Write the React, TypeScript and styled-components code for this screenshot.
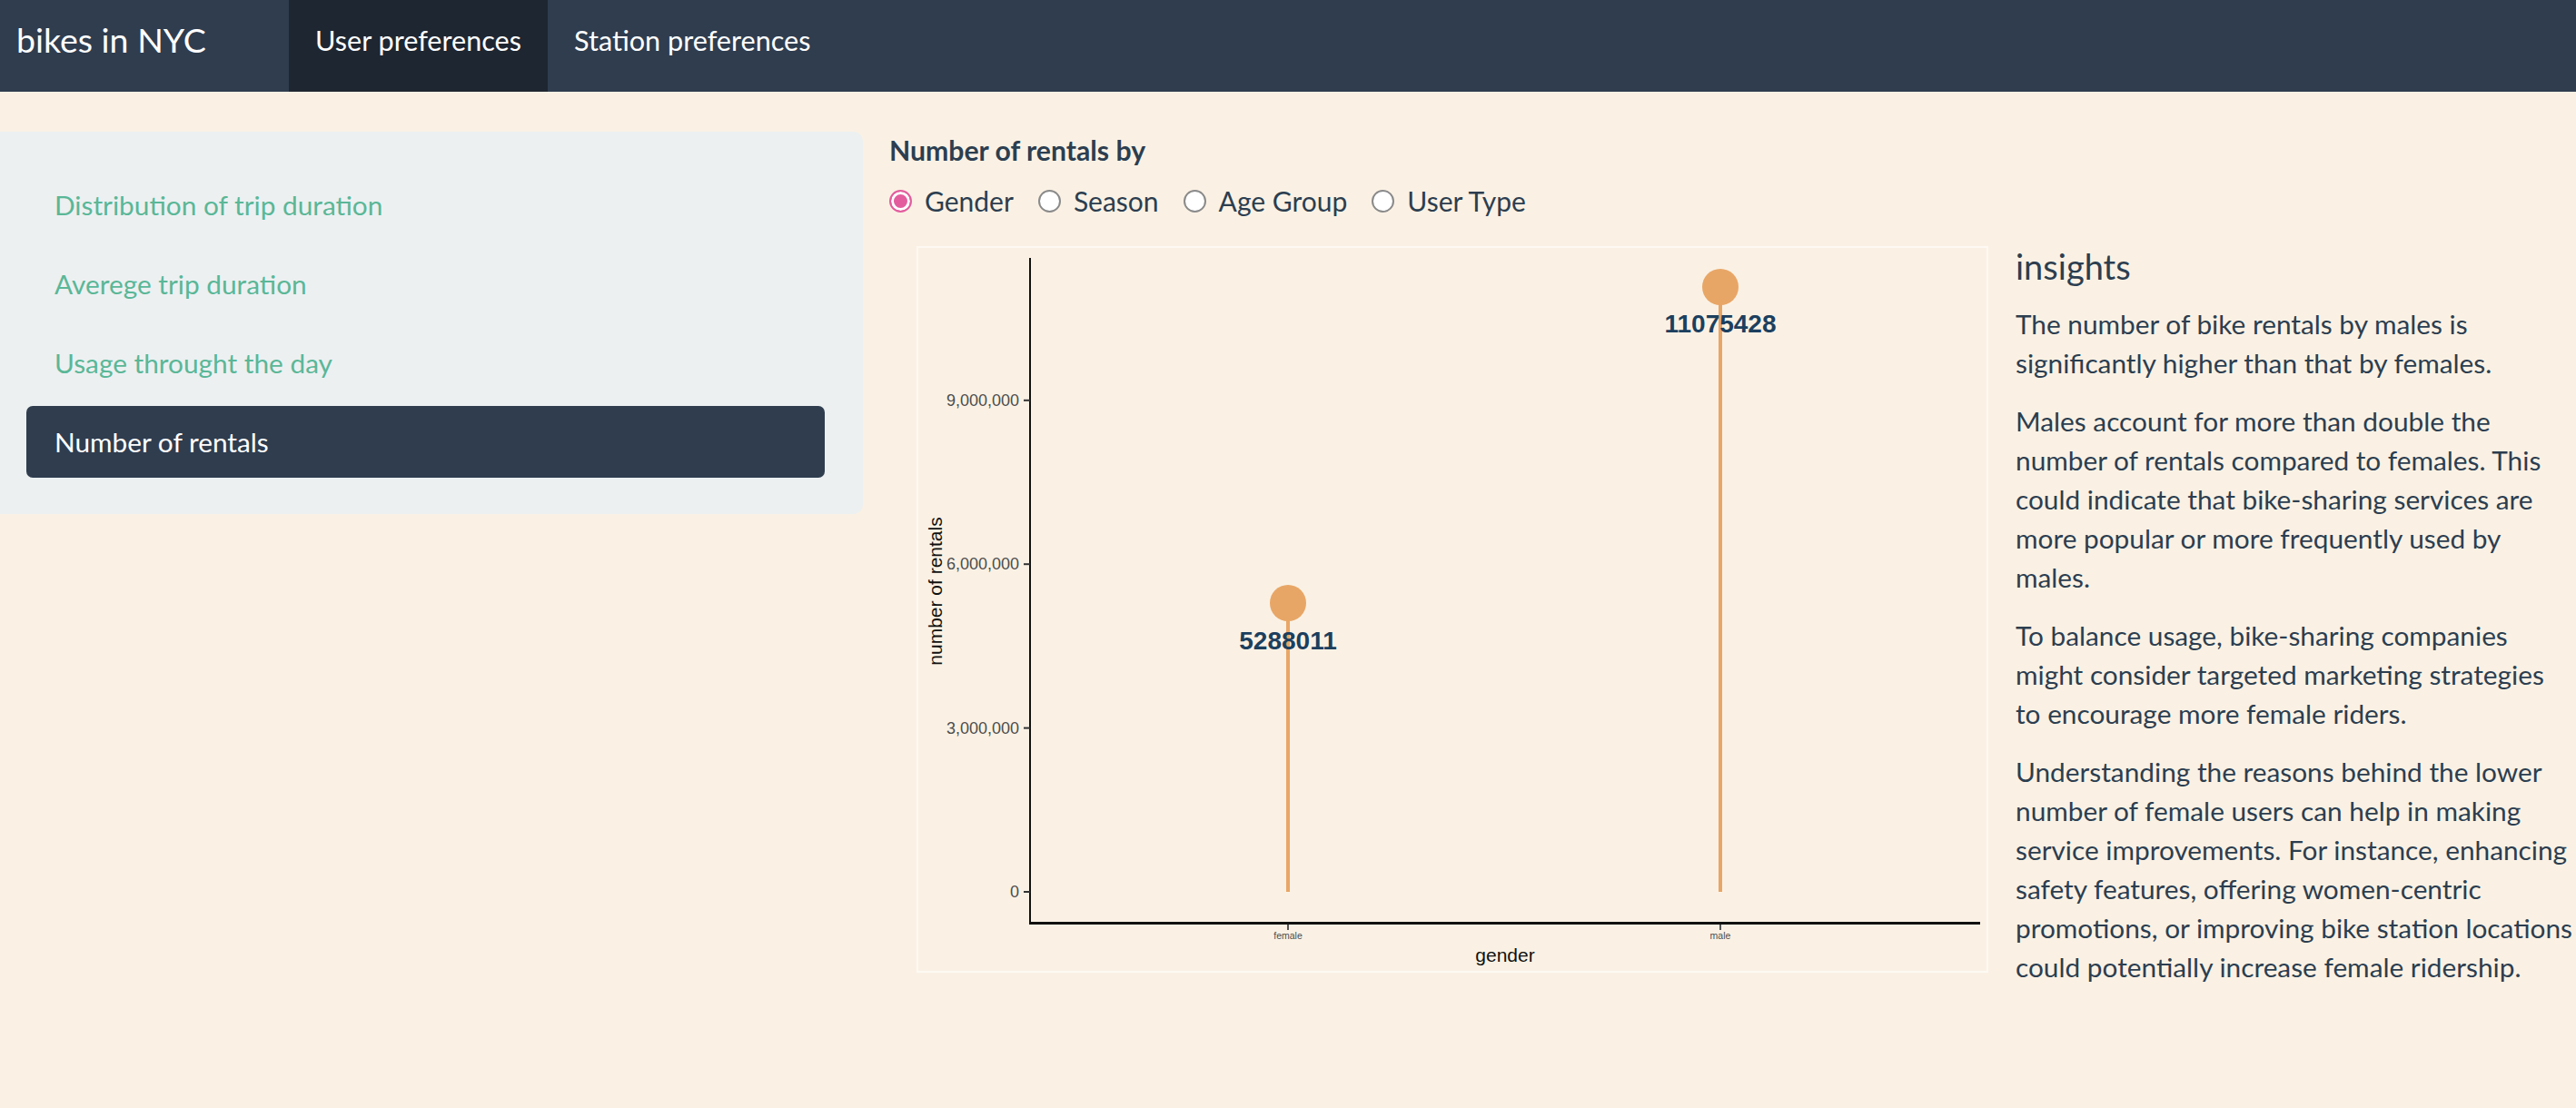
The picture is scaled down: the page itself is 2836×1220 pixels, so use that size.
import React from 'react'
import styled, {createGlobalStyle} from 'styled-components'

const GlobalStyle = createGlobalStyle`
  html, body {
    margin: 0;
    padding: 0;
    background: #faf1e4;
  }
`

const Page = styled.div`
  width: 2836px;
  min-height: 1220px;
  background: #faf1e4;
  color: #2c3e50;
  font-family: Lato, "Noto Sans", sans-serif;
`

const Navbar = styled.nav`
  height: 101px;
  background: #2f3d4f;
  display: flex;
  align-items: stretch;
`
const Brand = styled.div`
  width: 318px;
  box-sizing: border-box;
  padding: 0 0 14px 18px;
  display: flex;
  align-items: center;
  font-size: 37.5px;
  color: #ffffff;
`
const Tab = styled.div<{$active?: boolean}>`
  display: flex;
  align-items: center;
  padding: 0 29px 12px 29px;
  font-size: 30.6px;
  color: #ffffff;
  background: ${p => p.$active ? '#1e2631' : 'transparent'};
`

const Body = styled.div`
  display: grid;
  grid-template-columns: 950px 1fr;
  column-gap: 29px;
  padding-top: 44px;
  align-items: start;
`

const Well = styled.div`
  background: #ecf0f1;
  border-radius: 0 10px 10px 0;
  padding: 41px 42px 40px 29px;
  display: flex;
  flex-direction: column;
  gap: 8px;
`
const Pill = styled.div<{$active?: boolean}>`
  height: 79px;
  display: flex;
  align-items: center;
  padding-left: 31px;
  border-radius: 7px;
  font-size: 29.8px;
  color: ${p => p.$active ? '#ffffff' : '#5ab797'};
  background: ${p => p.$active ? '#2f3d4f' : 'transparent'};
`

const Main = styled.div`
  display: flex;
  flex-direction: column;
`
const Title = styled.div`
  font-weight: 700;
  font-size: 30.2px;
  line-height: 40px;
`
const RadioRow = styled.div`
  display: flex;
  align-items: center;
  height: 40px;
  margin-top: 16px;
`
const RadioItem = styled.label`
  display: flex;
  align-items: center;
  gap: 14px;
  margin-right: 27px;
  font-size: 30px;
`
const RadioDot = styled.span<{$checked?: boolean}>`
  width: 25px;
  height: 25px;
  box-sizing: border-box;
  border-radius: 50%;
  border: 2px solid ${p => p.$checked ? '#e35d9e' : '#8a8a8a'};
  background: ${p => p.$checked ? '#e35d9e' : '#ffffff'};
  box-shadow: ${p => p.$checked ? 'inset 0 0 0 3px #ffffff' : 'none'};
`

const ContentRow = styled.div`
  display: flex;
  align-items: flex-start;
  gap: 30px;
  margin-top: 30px;
  padding-left: 30px;
`
const ChartBox = styled.div`
  width: 1180px;
  height: 800px;
  flex: none;
`
const Insights = styled.div`
  width: 614px;
  flex: none;
`
const InsightsTitle = styled.h4`
  margin: 0 0 18px;
  font-size: 38px;
  font-weight: 400;
  line-height: 1.2;
`
const Para = styled.p`
  margin: 0 0 21px;
  font-size: 29.8px;
  line-height: 43px;
`

const yScale = (v: number) => 711 - (v / 3e6) * 180.4
const ticks = [0, 3e6, 6e6, 9e6]
const data = [
  {label: 'female', x: 409, value: 5288011},
  {label: 'male', x: 885, value: 11075428},
]

const Lollipop = () => (
  <svg width={1180} height={800} fontFamily='"Liberation Sans", Arial, sans-serif'>
    <rect x={1} y={1} width={1178} height={798} fill="none" stroke="#fdf9f3" strokeWidth={2}/>
    <line x1={125} y1={13} x2={125} y2={746} stroke="#111" strokeWidth={2}/>
    <line x1={124} y1={745.5} x2={1171} y2={745.5} stroke="#111" strokeWidth={3}/>
    {ticks.map(t => (
      <g key={t}>
        <line x1={118} x2={125} y1={yScale(t)} y2={yScale(t)} stroke="#333" strokeWidth={2}/>
        <text x={113} y={yScale(t)} textAnchor="end" dominantBaseline="central" fontSize={18} fill="#4d4d4d">
          {t.toLocaleString('en-US')}
        </text>
      </g>
    ))}
    {data.map(d => (
      <g key={d.label}>
        <line x1={d.x} x2={d.x} y1={747} y2={753} stroke="#555" strokeWidth={2}/>
        <text x={d.x} y={759} textAnchor="middle" dominantBaseline="central" fontSize={10.5} fill="#4d4d4d">{d.label}</text>
        <line x1={d.x} x2={d.x} y1={yScale(d.value)} y2={711} stroke="#e8a666" strokeWidth={4}/>
        <circle cx={d.x} cy={yScale(d.value)} r={20} fill="#e8a666"/>
        <text x={d.x} y={yScale(d.value) + 41} textAnchor="middle" dominantBaseline="central" fontSize={28} fontWeight={700} fill="#1c3f5e">
          {d.value}
        </text>
      </g>
    ))}
    <text x={648} y={780} textAnchor="middle" dominantBaseline="central" fontSize={21} fill="#111">gender</text>
    <text transform="translate(20 380) rotate(-90)" textAnchor="middle" dominantBaseline="central" fontSize={21} fill="#111">
      number of rentals
    </text>
  </svg>
)

const options = ['Gender', 'Season', 'Age Group', 'User Type']
const pills = ['Distribution of trip duration', 'Averege trip duration', 'Usage throught the day', 'Number of rentals']

export default function App() {
  return <Page>
    <GlobalStyle/>
    <Navbar>
      <Brand>bikes in NYC</Brand>
      <Tab $active>User preferences</Tab>
      <Tab>Station preferences</Tab>
    </Navbar>
    <Body>
      <Well>
        {pills.map((p, i) => <Pill key={p} $active={i === 3}>{p}</Pill>)}
      </Well>
      <Main>
        <Title>Number of rentals by</Title>
        <RadioRow>
          {options.map((o, i) => (
            <RadioItem key={o}>
              <RadioDot $checked={i === 0}/>
              {o}
            </RadioItem>
          ))}
        </RadioRow>
        <ContentRow>
          <ChartBox>
            <Lollipop/>
          </ChartBox>
          <Insights>
            <InsightsTitle>insights</InsightsTitle>
            <Para>The number of bike rentals by males is significantly higher than that by females.</Para>
            <Para>Males account for more than double the number of rentals compared to females. This could indicate that bike-sharing services are more popular or more frequently used by males.</Para>
            <Para>To balance usage, bike-sharing companies might consider targeted marketing strategies to encourage more female riders.</Para>
            <Para>Understanding the reasons behind the lower number of female users can help in making service improvements. For instance, enhancing safety features, offering women-centric promotions, or improving bike station locations could potentially increase female ridership.</Para>
          </Insights>
        </ContentRow>
      </Main>
    </Body>
  </Page>
}
